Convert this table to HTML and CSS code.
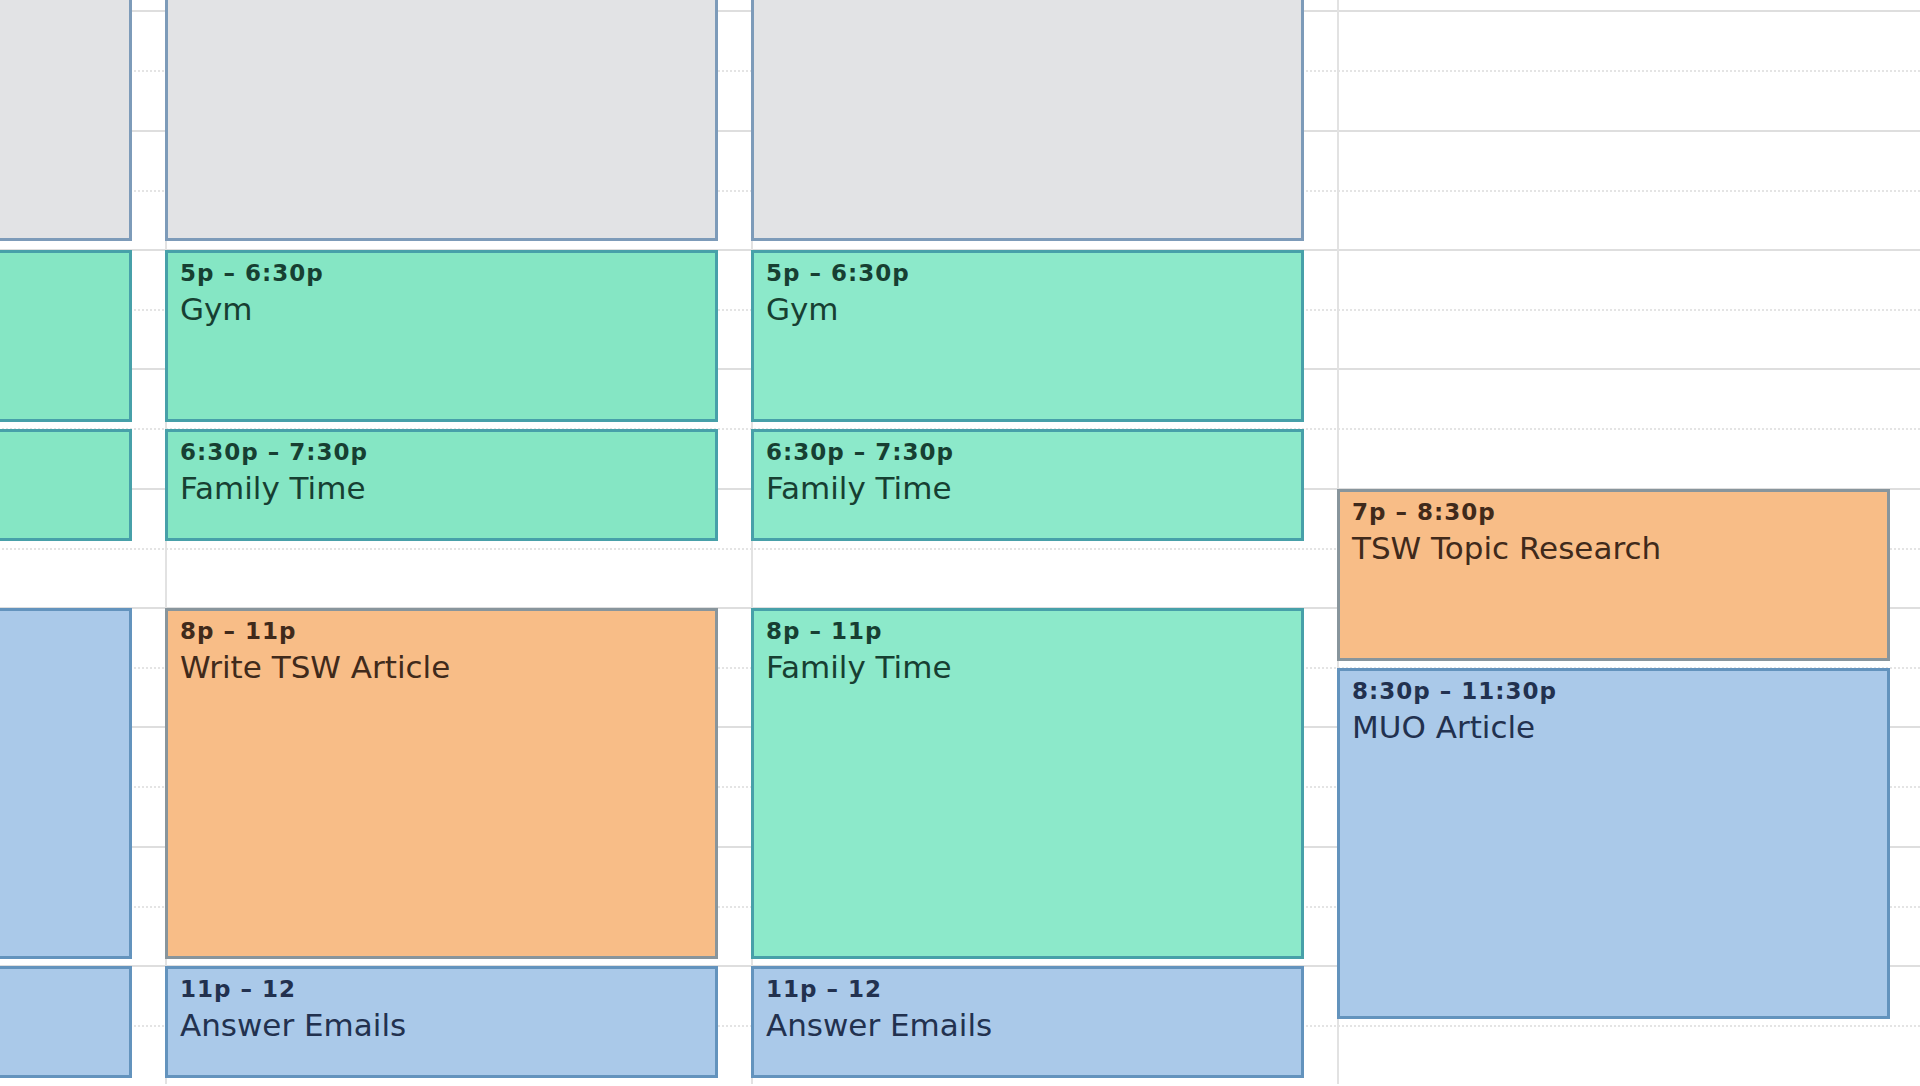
FILE: index.html
```html
<!DOCTYPE html>
<html lang="en">
<head>
  <meta charset="UTF-8" />
  <title>Week view</title>
  <link rel="stylesheet" href="styles.css">
</head>
<body>
  <div class="calendar">
    <!-- hour rows, 2p to 12a -->
    <div class="rows">
      <div class="hour"></div>
      <div class="hour"></div>
      <div class="hour"></div>
      <div class="hour"></div>
      <div class="hour"></div>
      <div class="hour"></div>
      <div class="hour"></div>
      <div class="hour"></div>
      <div class="hour"></div>
      <div class="hour"></div>
    </div>

    <div class="days">
      <!-- previous day, only its right edge is in view -->
      <div class="day">
        <div class="event grey" style="top:0;height:350px"></div>
        <div class="event green" style="top:359px;height:172px"></div>
        <div class="event green" style="top:538px;height:112px"></div>
        <div class="event blue" style="top:717px;height:351px"></div>
        <div class="event blue" style="top:1075px;height:112px"></div>
      </div>

      <div class="day">
        <div class="event grey" style="top:0;height:350px"></div>
        <div class="event green" style="top:359px;height:172px">
          <div class="time">5p – 6:30p</div>
          <div class="title">Gym</div>
        </div>
        <div class="event green" style="top:538px;height:112px">
          <div class="time">6:30p – 7:30p</div>
          <div class="title">Family Time</div>
        </div>
        <div class="event orange" style="top:717px;height:351px">
          <div class="time">8p – 11p</div>
          <div class="title">Write TSW Article</div>
        </div>
        <div class="event blue" style="top:1075px;height:112px">
          <div class="time">11p – 12</div>
          <div class="title">Answer Emails</div>
        </div>
      </div>

      <div class="day">
        <div class="event grey" style="top:0;height:350px"></div>
        <div class="event green light" style="top:359px;height:172px">
          <div class="time">5p – 6:30p</div>
          <div class="title">Gym</div>
        </div>
        <div class="event green light" style="top:538px;height:112px">
          <div class="time">6:30p – 7:30p</div>
          <div class="title">Family Time</div>
        </div>
        <div class="event green light" style="top:717px;height:351px">
          <div class="time">8p – 11p</div>
          <div class="title">Family Time</div>
        </div>
        <div class="event blue" style="top:1075px;height:112px">
          <div class="time">11p – 12</div>
          <div class="title">Answer Emails</div>
        </div>
      </div>

      <div class="day">
        <div class="event orange" style="top:598px;height:172px">
          <div class="time">7p – 8:30p</div>
          <div class="title">TSW Topic Research</div>
        </div>
        <div class="event blue" style="top:777px;height:351px">
          <div class="time">8:30p – 11:30p</div>
          <div class="title">MUO Article</div>
        </div>
      </div>
    </div>
  </div>
</body>
</html>
```

FILE: styles.css
```css
* {
  box-sizing: border-box;
}
html, body {
  margin: 0;
  padding: 0;
  background: #fff;
  overflow: hidden;
}
body {
  font-family: 'DejaVu Sans', 'Liberation Sans', sans-serif;
  height: 1086px;
}
.calendar {
  display: grid;
  margin-top: -109px;
  margin-left: -421px;
}
.rows,
.days {
  grid-area: 1 / 1;
}
.hour {
  position: relative;
  height: 119.33px;
  border-top: 2px solid #dedede;
}
.hour::after {
  content: '';
  position: absolute;
  left: 0;
  right: 0;
  top: 58px;
  border-top: 2px dotted #e4e4e4;
}
.days {
  display: grid;
  grid-template-columns: repeat(4, 586px);
}
.day {
  position: relative;
  border-left: 2px solid #e2e2e2;
}
.event {
  position: absolute;
  left: -2px;
  right: 33px;
  border: 3px solid;
  padding: 7px 12px 0 12px;
  overflow: hidden;
}
.time {
  font-size: 23px;
  font-weight: 700;
  letter-spacing: 1px;
  line-height: 26px;
}
.title {
  font-size: 31px;
  line-height: 36px;
  margin-top: 5px;
}
.grey {
  background: #e2e3e5;
  border-color: #7d9bb9;
}
.green {
  background: #85e6c4;
  border-color: #47a0a9;
  color: #173f32;
}
.green.light {
  background: #8ce9ca;
}
.orange {
  background: #f8bd87;
  border-color: #88959c;
  color: #402a1b;
}
.blue {
  background: #aac9e9;
  border-color: #6393bd;
  color: #22314f;
}
```
